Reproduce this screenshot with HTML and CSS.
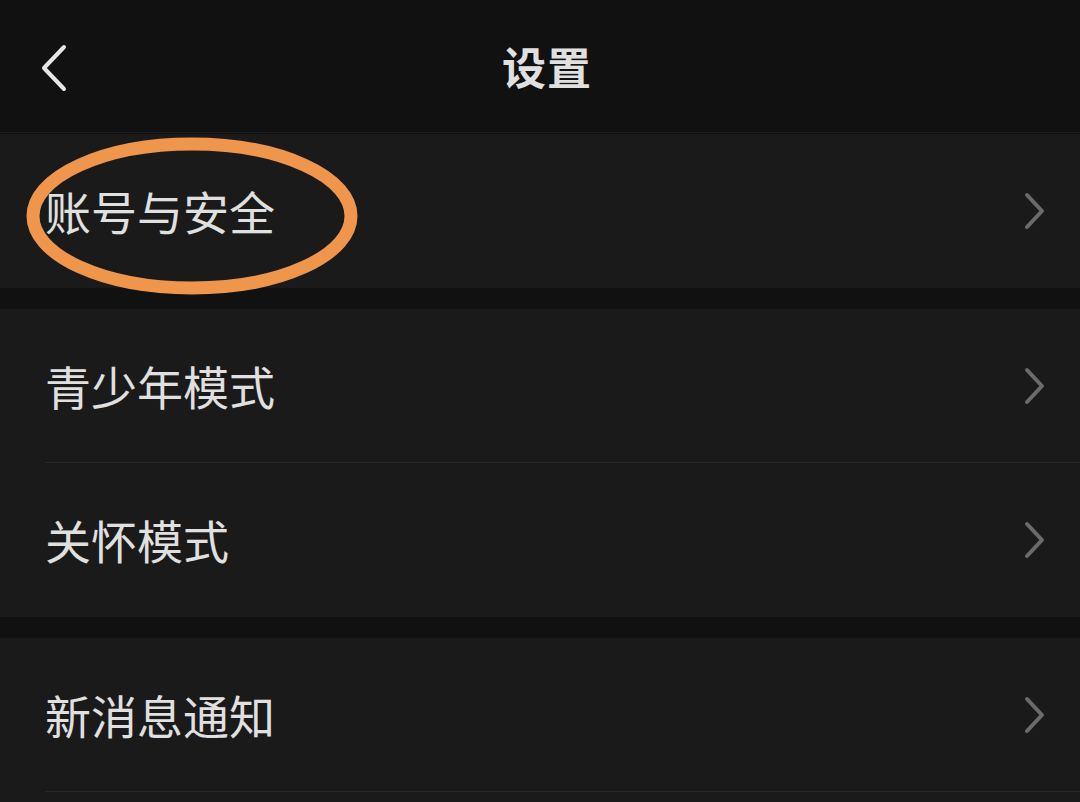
FILE: index.html
```html
<!DOCTYPE html>
<html lang="zh">
<head>
<meta charset="utf-8">
<link rel="stylesheet" href="styles.css">
</head>
<body>
<div class="page">
  <header class="topbar">
    <svg class="back" width="30" height="48" viewBox="0 0 30 48"><path d="M25 3 L5 24 L25 45" fill="none" stroke="#e6e6e6" stroke-width="4" stroke-linecap="round" stroke-linejoin="round"/></svg>
    <h1 class="title">设置</h1>
  </header>

  <section class="group">
    <div class="row highlight">
      <span class="label">账号与安全</span>
      <svg class="chev" width="24" height="40" viewBox="0 0 24 40"><path d="M4 4 L19 20 L4 36" fill="none" stroke="#6b6b6b" stroke-width="4" stroke-linecap="round" stroke-linejoin="round"/></svg>
      <svg class="ring" width="345" height="170" viewBox="0 0 345 170"><ellipse cx="166" cy="84" rx="159" ry="72" fill="none" stroke="#f0964c" stroke-width="13"/></svg>
    </div>
  </section>

  <section class="group">
    <div class="row divided">
      <span class="label">青少年模式</span>
      <svg class="chev" width="24" height="40" viewBox="0 0 24 40"><path d="M4 4 L19 20 L4 36" fill="none" stroke="#6b6b6b" stroke-width="4" stroke-linecap="round" stroke-linejoin="round"/></svg>
    </div>
    <div class="row">
      <span class="label">关怀模式</span>
      <svg class="chev" width="24" height="40" viewBox="0 0 24 40"><path d="M4 4 L19 20 L4 36" fill="none" stroke="#6b6b6b" stroke-width="4" stroke-linecap="round" stroke-linejoin="round"/></svg>
    </div>
  </section>

  <section class="group">
    <div class="row divided">
      <span class="label">新消息通知</span>
      <svg class="chev" width="24" height="40" viewBox="0 0 24 40"><path d="M4 4 L19 20 L4 36" fill="none" stroke="#6b6b6b" stroke-width="4" stroke-linecap="round" stroke-linejoin="round"/></svg>
    </div>
    <div class="row"></div>
  </section>
</div>
</body>
</html>
```
FILE: styles.css
```css
html, body {
  margin: 0;
  padding: 0;
  background: #111111;
  height: 100%;
  overflow: hidden;
}
.page {
  width: 1080px;
  height: 802px;
  overflow: hidden;
  font-family: "Noto Sans CJK SC", "Noto Sans", sans-serif;
  display: flex;
  flex-direction: column;
  gap: 21px;
}
.topbar {
  height: 132px;
  flex: none;
  background: #111111;
  display: flex;
  align-items: center;
  justify-content: center;
  position: relative;
  margin-bottom: -20px;
  border-bottom: 1px solid #1c1c1c;
}
.back {
  position: absolute;
  left: 39px;
  top: 44px;
}
.title {
  margin: 0;
  font-size: 44px;
  font-weight: 700;
  color: #e0e0e0;
  letter-spacing: 1px;
  line-height: 1;
  padding-left: 14px;
}
.group {
  background: #1a1a1a;
  flex: none;
}
.row {
  height: 154px;
  display: flex;
  align-items: center;
  justify-content: space-between;
  padding: 0 33px 0 45px;
  box-sizing: border-box;
  position: relative;
}
.row.divided::after {
  content: "";
  position: absolute;
  left: 45px;
  right: 0;
  bottom: 0;
  height: 1px;
  background: #272727;
}
.label {
  font-size: 46px;
  color: #e0e0e0;
  line-height: 1;
  padding-bottom: 3px;
}
.chev {
  flex: none;
}
.ring {
  position: absolute;
  left: 26px;
  top: -2px;
  pointer-events: none;
}
```
